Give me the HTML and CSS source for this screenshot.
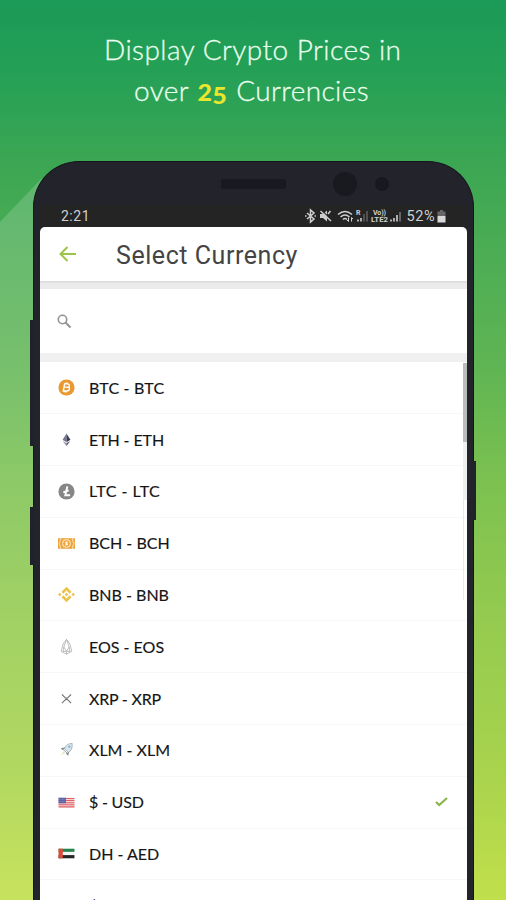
FILE: index.html
```html
<!DOCTYPE html>
<html lang="en">
<head>
<meta charset="utf-8">
<title>Select Currency</title>
<link rel="stylesheet" href="styles.css">
</head>
<body>
<main class="promo">
  <svg class="glow" viewBox="0 0 60 900" width="60" height="900">
    <defs><linearGradient id="g" x1="0" y1="0" x2="0" y2="1"><stop offset="0" stop-color="#fff" stop-opacity=".17"/><stop offset=".45" stop-color="#fff" stop-opacity=".13"/><stop offset="1" stop-color="#fff" stop-opacity=".1"/></linearGradient></defs>
    <path d="M0 222 42 178V900H0z" fill="url(#g)"/>
  </svg>
  <h1 class="headline">
    <span class="line one">Display Crypto Prices in</span>
    <span class="line two">over <b class="count">2<span class="drop">5</span></b> Currencies</span>
  </h1>
  <section class="phone">
    <i class="key volume"></i><i class="key assist"></i><i class="key power"></i>
    <div class="bezel"><i class="speaker"></i><i class="camera"></i><i class="sensor"></i></div>
    <div class="status">
      <span class="clock">2:21</span>
      <svg class="signals" width="98" height="16" viewBox="0 0 98 16" fill="none" stroke="#cfcfcf">
        <path d="M3 5l7 6-3.500 3V2L10 5l-7 6" stroke-width="1.500"/>
        <path d="M1 8h1.500M10.500 8H12" stroke-width="1.500"/>
        <path d="M16 6h3l4-3.500v11l-4-3.500h-3z" fill="#cfcfcf" stroke="none"/>
        <path d="M17 2l11 10" stroke="#242424" stroke-width="1.200"/><path d="M16.500 3l10.500 10M24 6l2.500-3" stroke-width="1.500"/>
        <path d="M34 6.500q7-6 14 0M36.500 9q4.500-4 9 0M39 11.500q2-2 4 0" stroke-width="1.500"/>
        <path d="M44.500 9.500v4m-1.500-1.500 1.500 1.500M47.500 13.500v-4m1.500 1.500-1.500-1.500"/>
        <path d="M54 13.500v-2M57 13.500V10" stroke-width="1.600"/><path d="M60 13.500V6M63 13.500V3" stroke="#5d5d5d" stroke-width="1.600"/>
        <g fill="#cfcfcf" stroke="none" class="tiny"><text x="52" y="7">R</text><text x="69" y="7" textLength="13">Vo))</text><text x="67" y="14" textLength="17" lengthAdjust="spacingAndGlyphs">LTE2</text></g>
        <path d="M87 13.500v-2M90 13.500V10M93 13.500V7" stroke-width="1.600"/><path d="M96 13.500V4" stroke="#777" stroke-width="1.600"/>
      </svg>
      <span class="percent">52%</span>
      <svg class="battery" width="9" height="13" viewBox="0 0 9 13"><path d="M3 0h3v1.500h2.500V6H.5V1.500H3z" fill="#666"/><path d="M.5 6h8v6.500h-8z" fill="#d8d8d8"/></svg>
    </div>
    <div class="screen">
      <header class="bar">
        <svg width="18" height="16" viewBox="0 0 18 16" fill="none" stroke="#9ac549" stroke-width="2"><path d="M17 8H2M8.500 1 1.500 8l7 7"/></svg>
        <h2 class="title">Select Currency</h2>
      </header>
      <div class="search"><svg width="15" height="15" viewBox="0 0 15 15" fill="none" stroke="#929292"><circle cx="5.500" cy="5.500" r="4.200" stroke-width="1.600"/><path d="m8.500 8.500 5 5" stroke-width="2"/></svg></div>
      <ul class="list">
        <li class="row"><svg class="icon" viewBox="0 0 16 16"><circle cx="8" cy="8" r="7.600" fill="#e9992f"/><path d="M6.300 4.200 5 11.300h3.300c3 0 3.200-3 1.300-3.500 1.800-.8 1.500-3.200-.9-3.200H6.200M5.800 7.700h3.500M7.400 3.300l-.2 1.200M9 3.500l-.2 1.200M6.600 11.300l-.2 1.300M8.200 11.300 8 12.600" fill="none" stroke="#fff" stroke-width="1.300"/></svg><span class="label btc">BTC - BTC</span></li>
        <li class="row"><svg class="icon" viewBox="0 0 16 16"><path d="M8 2.300 4.300 8.300 8 10.500z" fill="#777a91"/><path d="m8 2.300 3.700 6L8 10.500z" fill="#3c3d55"/><path d="M4.500 9.400 8 11.500v2.600z" fill="#8b8da0"/><path d="M11.500 9.400 8 11.500v2.600z" fill="#4b4c65"/></svg><span class="label eth">ETH - ETH</span></li>
        <li class="row"><svg class="icon" viewBox="0 0 16 16"><circle cx="8" cy="8" r="7.600" fill="#868686"/><path d="M8.800 3.200 6.900 11.500h4.500M5 8.900l5-2" fill="none" stroke="#fff" stroke-width="1.800"/></svg><span class="label ltc">LTC - LTC</span></li>
        <li class="row"><svg class="icon" viewBox="0 0 16 16"><path d="M0 3h16v10H0z" fill="#eba642"/><path d="M2.200 3v2.500L1 8l1.200 2.500V13M13.800 3v2.500L15 8l-1.200 2.500V13" fill="none" stroke="#fff6e6" stroke-width=".7"/><circle cx="8" cy="8" r="3.700" fill="none" stroke="#fff2da" stroke-width=".9"/><path d="M7 6.200v3.600h1.300c1.500 0 1.500-1.800.4-1.800 1 0 .8-1.800-.4-1.800z" fill="#fff2da"/></svg><span class="label bch">BCH - BCH</span></li>
        <li class="row"><svg class="icon" viewBox="0 0 16 16" fill="#ecc24c"><path d="m8 .8 4.700 4.700L11 7.200l-3-3-3 3-1.700-1.700zM8 15.200l4.700-4.700L11 8.800l-3 3-3-3-1.700 1.700zM8 6.300 9.700 8 8 9.700 6.300 8zM1.700 6.300 3.400 8 1.700 9.700 0 8zM14.300 6.300 16 8l-1.700 1.700L12.600 8z"/></svg><span class="label bnb">BNB - BNB</span></li>
        <li class="row"><svg class="icon" viewBox="0 0 16 16" fill="none" stroke="#b2b2b2" stroke-width=".8"><path d="M8 1.300 4.800 5.700 3 12.500l5 2.700 5-2.700-1.800-6.800zM8 1.300 5.500 8.500 4.700 13.300M8 1.300l2.500 7.200.8 4.800M5.500 8.500 8 12.500l2.500-4M4.800 12.500h6.400M8 12.500v2.700"/></svg><span class="label eos">EOS - EOS</span></li>
        <li class="row"><svg class="icon" viewBox="0 0 16 16" fill="none" stroke="#777" stroke-width="1.100"><path d="M3.700 4.200 6.500 7q1.500 1.300 3 0l2.800-2.800M3.700 12.300l2.800-2.800q1.500-1.300 3 0l2.800 2.800"/></svg><span class="label xrp">XRP - XRP</span></li>
        <li class="row"><svg class="icon" viewBox="0 0 16 16"><path d="M13.300 1.300Q8 1.500 6 6l3.700 3.800Q14 7.500 13.300 1.300z" fill="#dbe6ea" stroke="#9bb1b9" stroke-width=".8"/><path d="M6.500 5.500 3 6.200 5 7.500M10 9.500l-.7 3-1.500-2M5.500 7.500l2.800 2.800" fill="#7d9098" stroke="#7d9098" stroke-width=".8"/><circle cx="10.700" cy="4.500" r="1.200" fill="#8eb9cc"/><path d="M5.300 8.500 2.700 12.700l4-2.400z" fill="#efe3be"/></svg><span class="label xlm">XLM - XLM</span></li>
        <li class="row"><svg class="icon" viewBox="0 0 16 16"><path d="M.5 3.500h15v9H.5z" fill="#f3d4d5"/><path d="M.5 4.200h15M.5 6.200h15M.5 8.200h15M.5 10.200h15M.5 12.100h15" stroke="#dd6269" stroke-width="1"/><path d="M.5 3.500h7v5.200h-7z" fill="#5c66a7"/><path d="M1.300 5h6M1.300 7h6" stroke="#a9aed0" stroke-width=".5" stroke-dasharray=".6 .7"/></svg><span class="label usd">$ - USD</span><svg class="check" width="13" height="10" viewBox="0 0 13 10" fill="none" stroke="#8ab34c" stroke-width="2.100"><path d="m1 5 3.200 3L12 1"/></svg></li>
        <li class="row"><svg class="icon" viewBox="0 0 16 16"><path d="M.5 3.500h15v3H.5z" fill="#25844b"/><path d="M.5 6.500h15v3H.5z" fill="#f6f6f6"/><path d="M.5 9.500h15v3H.5z" fill="#262626"/><path d="M.5 3.500h4v9h-4z" fill="#df4938"/></svg><span class="label aed">DH - AED</span></li>
        <li class="row"><svg class="icon" viewBox="0 0 16 16"></svg><span class="label">$ - ARS</span></li>
      </ul>
      <i class="scroll"></i><i class="scroll-tail"></i><i class="scroll-line"></i>
    </div>
  </section>
</main>
</body>
</html>
```
FILE: styles.css
```css
* { box-sizing: border-box; }
body { margin: 0; font-family: Roboto, sans-serif; }
i { display: block; }
h1, h2, ul { margin: 0; padding: 0; font-weight: 400; }
.promo { position: relative; height: 900px; overflow: hidden; background: linear-gradient(#1b9956 0, #24a056 70px, #3ba653 160px, #4fae54 270px, #60b553 370px, #7bc150 480px, #93ca4f 610px, #a8d34d 770px, #c1df4b 900px); }
.glow { position: absolute; left: 0; top: 0; }
.headline { height: 161px; padding-top: 29px; color: #eaffef; font: 300 28px/41px Lato, sans-serif; -webkit-text-stroke: .3px #eaffef; }
.line { display: block; width: max-content; height: 41px; white-space: nowrap; }
.one { margin-left: 104px; letter-spacing: .46px; }
.two { margin-left: 134px; letter-spacing: .38px; }
.count { display: inline-block; margin: 0 1px; color: #e9e62d; font-size: 25px; font-weight: 900; line-height: 20px; -webkit-text-stroke: 0; transform: scaleY(.9); transform-origin: 50% 80%; }
.drop { vertical-align: -3px; }
.phone { position: relative; width: 441px; height: 820px; margin-left: 33px; border: solid #15161c; border-width: 1px 1px 0; padding: 0 6px; border-radius: 46px 46px 0 0; background: #22232b; }
.key { position: absolute; background: #20212a; }
.volume { left: -4px; top: 158px; width: 4px; height: 126px; }
.assist { left: -4px; top: 345px; width: 4px; height: 58px; }
.power { right: -3px; top: 299px; width: 3px; height: 59px; background: #20242a; }
.bezel { display: flex; align-items: center; height: 43px; padding-left: 181px; }
.speaker { width: 65px; height: 10px; border-radius: 3px; background: #191a21; }
.camera { width: 24px; height: 24px; margin-left: 47px; border-radius: 50%; background: #191a20; }
.sensor { width: 14px; height: 14px; margin-left: 18px; border-radius: 50%; background: #18191f; }
.status { display: flex; align-items: center; height: 22px; padding: 0 21px 0 21px; background: #242424; color: #cfcfcf; }
.clock { font-size: 14px; letter-spacing: .5px; }
.signals { margin-left: auto; }
.tiny { font: 700 7px Roboto, sans-serif; }
.percent { margin: 0 2px 0 5px; font-size: 14.5px; letter-spacing: .5px; }
.screen { position: relative; height: 700px; border-radius: 5px 5px 0 0; background: #fff; overflow: hidden; }
.bar { position: relative; display: flex; align-items: center; height: 54px; padding-left: 19px; box-shadow: 0 1px 2px #d4d4d4; }
.title { margin-left: 39px; padding-top: 3px; color: #444; font-size: 25px; line-height: 32px; letter-spacing: .55px; white-space: nowrap; }
.search { display: flex; align-items: center; height: 81px; padding-left: 17px; border-top: 8px solid #ebebeb; border-bottom: 9px solid #f0f0f0; }
.list { padding-top: .4px; list-style: none; }
.row { display: flex; align-items: center; height: 51.8px; padding-left: 18px; border-bottom: 1px solid #f7f7f7; color: #151515; }
.icon { width: 17px; height: 17px; }
.label { margin-left: 14px; font: 400 16px/22px Lato, sans-serif; white-space: nowrap; -webkit-text-stroke: .15px #151515; }
.btc { letter-spacing: .2px; }
.eth { letter-spacing: -.1px; }
.ltc { letter-spacing: .5px; }
.xrp, .usd { letter-spacing: -.2px; }
.check { margin: 0 19px 0 auto; }
.scroll, .scroll-tail, .scroll-line { position: absolute; top: 136px; right: 0; width: 4px; height: 79px; background: #bbbdbd; }
.scroll-tail { top: 215px; height: 58px; background: #edf0ef; }
.scroll-line { top: 273px; right: 3px; width: 1px; height: 100px; background: #e8eae9; }
```
